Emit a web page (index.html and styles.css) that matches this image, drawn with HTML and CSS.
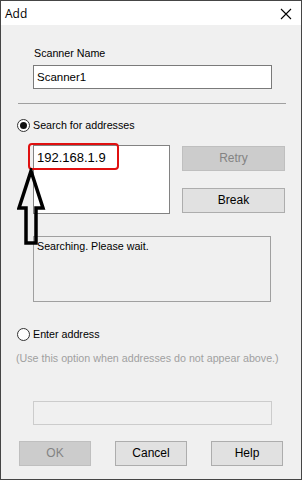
FILE: index.html
```html
<!DOCTYPE html>
<html>
<head>
<meta charset="utf-8">
<link rel="stylesheet" href="styles.css">
</head>
<body>
<div class="window">
  <div class="titlebar">
    <span class="title">Add</span>
    <svg class="close" width="12" height="12" viewBox="0 0 12 12"><path d="M1 1L11 11M11 1L1 11" stroke="#000" stroke-width="1.1" fill="none"/></svg>
  </div>
  <div class="content">
    <div class="label">Scanner Name</div>
    <div class="textbox">Scanner1</div>
    <div class="separator"></div>
    <div class="radio-row first">
      <span class="radio checked"><span class="dot"></span></span>
      <span>Search for addresses</span>
    </div>
    <div class="search-area">
      <div class="listbox"><div class="item">192.168.1.9</div></div>
      <div class="side-buttons">
        <div class="btn disabled retry">Retry</div>
        <div class="btn break">Break</div>
      </div>
    </div>
    <div class="status">Searching. Please wait.</div>
    <div class="radio-row second">
      <span class="radio"></span>
      <span>Enter address</span>
    </div>
    <div class="hint">(Use this option when addresses do not appear above.)</div>
    <div class="textbox disabled-box"></div>
    <div class="bottom-buttons">
      <div class="btn disabled">OK</div>
      <div class="btn">Cancel</div>
      <div class="btn">Help</div>
    </div>
  </div>
  <div class="highlight"></div>
  <svg class="arrow" width="40" height="90" viewBox="0 0 40 90">
    <path d="M14 3 L26 40 L19 40 L19 75 L9 75 L9 40 L2 40 Z" fill="none" stroke="#000" stroke-width="3.5" stroke-linejoin="miter"/>
  </svg>
</div>
</body>
</html>
```

FILE: styles.css
```css
html, body {
  margin: 0;
  padding: 0;
}
.window {
  width: 302px;
  height: 480px;
  box-sizing: border-box;
  border: 1px solid #454545;
  background: #f0f0f0;
  position: relative;
  font-family: "Liberation Sans", Arial, sans-serif;
  font-size: 10.7px;
  color: #000;
  overflow: hidden;
}
.titlebar {
  height: 24px;
  background: #fff;
  display: flex;
  align-items: center;
  justify-content: space-between;
  padding: 0 9px 0 4px;
}
.title {
  font-family: "Open Sans", "Liberation Sans", sans-serif;
  font-size: 12px;
  color: #000;
}
.close {
  margin-top: 2px;
}
.content {
  display: flex;
  flex-direction: column;
  line-height: 13px;
}
.label {
  margin-top: 22px;
  padding-left: 33px;
}
.textbox {
  margin-top: 5px;
  margin-left: 32px;
  width: 239px;
  height: 24px;
  box-sizing: border-box;
  border: 1px solid #7a7a7a;
  background: #fff;
  padding: 5px 3px;
  font-size: 11.5px;
}
.separator {
  margin-top: 14px;
  margin-left: 17px;
  width: 268px;
  height: 1px;
  background: #a0a0a0;
}
.radio-row {
  display: flex;
  align-items: center;
  gap: 3px;
  margin-left: 16px;
  height: 13px;
}
.radio-row.first {
  margin-top: 15px;
}
.radio-row.second {
  margin-top: 26px;
}
.radio {
  width: 13px;
  height: 13px;
  box-sizing: border-box;
  border: 1px solid #333;
  border-radius: 50%;
  background: #fff;
  display: flex;
  align-items: center;
  justify-content: center;
}
.radio .dot {
  width: 7px;
  height: 7px;
  border-radius: 50%;
  background: #111;
}
.search-area {
  margin-top: 13px;
  display: flex;
  margin-left: 32px;
}
.listbox {
  width: 137px;
  height: 69px;
  box-sizing: border-box;
  border: 1px solid #828282;
  background: #fff;
  padding: 4px 3px;
}
.item {
  font-size: 13px;
  line-height: 15px;
}
.side-buttons {
  margin-left: 12px;
  display: flex;
  flex-direction: column;
  gap: 17px;
  padding-top: 1px;
}
.btn {
  width: 72px;
  height: 25px;
  box-sizing: border-box;
  border: 1px solid #adadad;
  background: #e1e1e1;
  display: flex;
  align-items: center;
  justify-content: center;
  font-size: 12px;
}
.side-buttons .btn {
  width: 103px;
}
.btn.disabled {
  background: #cccccc;
  border-color: #bfbfbf;
  color: #838383;
}
.status {
  margin-top: 22px;
  margin-left: 32px;
  width: 238px;
  height: 66px;
  box-sizing: border-box;
  border: 1px solid #a0a0a0;
  padding: 3px;
}
.hint {
  margin-top: 11px;
  margin-left: 15px;
  color: #a0a0a0;
}
.disabled-box {
  margin-top: 36px;
  background: #f0f0f0;
  border-color: #cccccc;
}
.bottom-buttons {
  margin-top: 16px;
  margin-left: 18px;
  display: flex;
  gap: 24px;
}
.highlight {
  position: absolute;
  left: 27px;
  top: 142px;
  width: 91px;
  height: 27px;
  box-sizing: border-box;
  border: 2px solid #e01010;
  border-radius: 4px;
}
.arrow {
  position: absolute;
  left: 16px;
  top: 167px;
}
```
